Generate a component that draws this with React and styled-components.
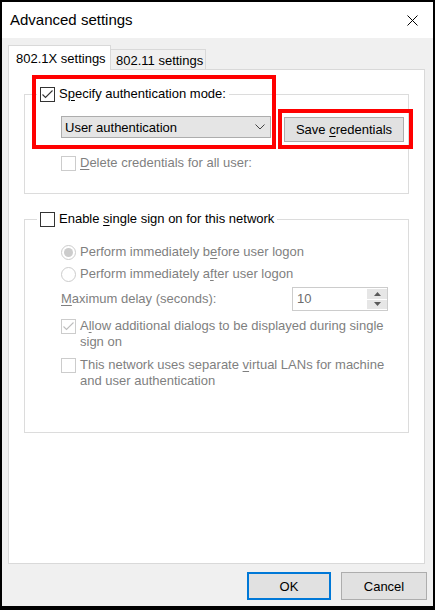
import React from 'react';
import styled, { createGlobalStyle } from 'styled-components';

const GlobalStyle = createGlobalStyle`
  html, body { margin: 0; padding: 0; background: #ffffff; }
  body { font-family: "Liberation Sans", Arial, sans-serif; }
`;

const FONT = `"Liberation Sans", Arial, sans-serif`;
const DIS = '#7f7f7f';

const Window = styled.div`
  width: 435px;
  height: 610px;
  box-sizing: border-box;
  border: 2px solid #000;
  border-bottom-width: 4px;
  background: #f0f0f0;
  display: flex;
  flex-direction: column;
  font-family: ${FONT};
  font-size: 13px;
  color: #000;
  overflow: hidden;
`;

const TitleBar = styled.div`
  height: 36px;
  flex-shrink: 0;
  box-sizing: border-box;
  background: #ffffff;
  display: flex;
  align-items: center;
  justify-content: space-between;
  padding: 0 15px 2px 8px;
`;

const Title = styled.span`
  font-size: 15px;
  color: #000;
`;

const CloseSvg = styled.svg`
  display: block;
  margin-top: 2px;
`;

const Body = styled.div`
  flex: 1;
  min-height: 0;
  display: flex;
  flex-direction: column;
  padding: 7px 8px 0 6px;
`;

const TabStrip = styled.div`
  display: flex;
  align-items: flex-end;
  height: 24px;
  flex-shrink: 0;
  position: relative;
  z-index: 1;
`;

const Tab = styled.div`
  box-sizing: border-box;
  display: flex;
  align-items: center;
  padding-top: 1px;
  font-size: 13px;
  white-space: nowrap;
  width: ${p => (p.$active ? 103 : 95)}px;
  height: ${p => (p.$active ? 25 : 20)}px;
  margin-bottom: ${p => (p.$active ? -1 : 0)}px;
  padding-left: ${p => (p.$active ? 7 : 5)}px;
  background: ${p => (p.$active ? '#ffffff' : '#f0f0f0')};
  border: 1px solid #d9d9d9;
  border-bottom: none;
  border-left: ${p => (p.$active ? '1px solid #d9d9d9' : 'none')};
`;

const Panel = styled.div`
  flex: 1;
  min-height: 0;
  position: relative;
  background: #ffffff;
  border: 1px solid #d9d9d9;
  padding: 16px 15px 0 15px;
  display: flex;
  flex-direction: column;
`;

const GroupBox = styled.fieldset`
  margin: ${p => p.$mt || 0}px 0 0 0;
  min-width: 0;
  border: 1px solid #dcdcdc;
  padding: 0 4px ${p => p.$pb}px 12px;
`;

const Legend = styled.legend`
  padding: 0 3px;
  height: 16px;
  line-height: 16px;
`;

const Content = styled.div`
  margin-left: 24px;
  padding-top: ${p => p.$pt}px;
  display: flex;
  flex-direction: column;
`;

const OptionRow = styled.label`
  display: flex;
  align-items: ${p => (p.$multi ? 'flex-start' : 'center')};
  gap: 4px;
  line-height: 16px;
  margin-top: ${p => p.$mt || 0}px;
  color: ${p => (p.$disabled ? DIS : '#000')};
`;

const OptionText = styled.span`
  flex: 1;
  min-width: 0;
`;

const Box = styled.span`
  box-sizing: border-box;
  width: 15px;
  height: 15px;
  flex-shrink: 0;
  margin-top: ${p => (p.$multi ? 0.5 : 0)}px;
  border: 1px solid ${p => (p.$disabled ? '#cccccc' : '#333333')};
  background: #ffffff;
  display: inline-flex;
  align-items: center;
  justify-content: center;
`;

const RadioCircle = styled.span`
  box-sizing: border-box;
  width: 15px;
  height: 15px;
  flex-shrink: 0;
  border-radius: 50%;
  border: 1px solid #cccccc;
  background: #ffffff;
  display: inline-flex;
  align-items: center;
  justify-content: center;
`;

const RadioDot = styled.span`
  width: 9px;
  height: 9px;
  border-radius: 50%;
  background: #cccccc;
`;

const Mn = styled.span`
  text-decoration: underline;
  text-underline-offset: 2px;
`;

const ComboRow = styled.div`
  display: flex;
  align-items: flex-start;
  gap: 13px;
`;

const Combo = styled.div`
  box-sizing: border-box;
  width: 210px;
  height: 22px;
  border: 1px solid #adadad;
  background: #e5e5e5;
  display: flex;
  align-items: center;
  justify-content: space-between;
  padding: 0 5px 0 3px;
`;

const Button = styled.button`
  box-sizing: border-box;
  width: ${p => p.$w}px;
  height: ${p => p.$h}px;
  margin-top: ${p => p.$mt || 0}px;
  padding: 0;
  font-family: ${FONT};
  font-size: 13px;
  color: #000;
  background: #e1e1e1;
  border: ${p => (p.$default ? '2px solid #0078d7' : '1px solid #adadad')};
  border-radius: 0;
`;

const DelayRow = styled.div`
  display: grid;
  grid-template-columns: 231px 96px;
  align-items: center;
  margin-top: ${p => p.$mt || 0}px;
  color: ${DIS};
  line-height: 16px;
`;

const SpinBox = styled.div`
  box-sizing: border-box;
  width: 96px;
  height: 24px;
  border: 1px solid #cccccc;
  background: #ffffff;
  display: flex;
`;

const SpinValue = styled.span`
  flex: 1;
  padding-left: 4px;
  line-height: 22px;
  color: #6d6d6d;
`;

const SpinButtons = styled.div`
  width: 20px;
  padding: 1px 0;
  display: flex;
  flex-direction: column;
  gap: 1px;
`;

const SpinButton = styled.div`
  flex: 1;
  background: #e6e6e6;
  display: flex;
  align-items: center;
  justify-content: center;
`;

const Footer = styled.div`
  flex-shrink: 0;
  display: flex;
  justify-content: flex-end;
  gap: 10px;
  padding: 8px 6px 6px 6px;
`;

const Highlight = styled.div`
  position: absolute;
  box-sizing: border-box;
  border: 4px solid #ff0000;
  pointer-events: none;
  left: ${p => p.$x}px;
  top: ${p => p.$y}px;
  width: ${p => p.$w}px;
  height: ${p => p.$h}px;
`;

const CheckMark = ({ color }) => (
  <svg width="13" height="13" viewBox="0 0 13 13">
    <polyline points="1.5,6.5 4.5,9.5 11.5,2.5" fill="none" stroke={color} strokeWidth="1.1" />
  </svg>
);

const Checkbox = ({ checked, disabled, multi }) => (
  <Box $disabled={disabled} $multi={multi}>
    {checked && <CheckMark color={disabled ? '#bdbdbd' : '#333333'} />}
  </Box>
);

const Radio = ({ checked }) => (
  <RadioCircle>{checked && <RadioDot />}</RadioCircle>
);

const Chevron = () => (
  <svg width="10" height="6" viewBox="0 0 10 6">
    <polyline points="0.5,0.5 5,5 9.5,0.5" fill="none" stroke="#444" strokeWidth="1" />
  </svg>
);

const Arrow = ({ up }) => (
  <svg width="7" height="4" viewBox="0 0 7 4">
    <polygon points={up ? '0,4 3.5,0 7,4' : '0,0 3.5,4 7,0'} fill="#5a5a5a" />
  </svg>
);

export default function App() {
  return (
    <>
      <GlobalStyle />
      <Window>
        <TitleBar>
          <Title>Advanced settings</Title>
          <CloseSvg width="11" height="11" viewBox="0 0 11 11">
            <line x1="0.5" y1="0.5" x2="10.5" y2="10.5" stroke="#000" strokeWidth="1" />
            <line x1="10.5" y1="0.5" x2="0.5" y2="10.5" stroke="#000" strokeWidth="1" />
          </CloseSvg>
        </TitleBar>
        <Body>
          <TabStrip>
            <Tab $active>802.1X settings</Tab>
            <Tab>802.11 settings</Tab>
          </TabStrip>
          <Panel>
            <GroupBox $pb={22}>
              <Legend>
                <OptionRow>
                  <Checkbox checked />
                  <OptionText>S<Mn>p</Mn>ecify authentication mode:</OptionText>
                </OptionRow>
              </Legend>
              <Content $pt={14}>
                <ComboRow>
                  <Combo>
                    <span>User authentication</span>
                    <Chevron />
                  </Combo>
                  <Button $w={120} $h={25} $mt={1}>Save <Mn>c</Mn>redentials</Button>
                </ComboRow>
                <OptionRow $disabled $mt={13}>
                  <Checkbox disabled />
                  <OptionText><Mn>D</Mn>elete credentials for all user:</OptionText>
                </OptionRow>
              </Content>
            </GroupBox>

            <GroupBox $mt={17} $pb={43}>
              <Legend>
                <OptionRow>
                  <Checkbox />
                  <OptionText>Enable <Mn>s</Mn>ingle sign on for this network</OptionText>
                </OptionRow>
              </Legend>
              <Content $pt={17}>
                <OptionRow $disabled>
                  <Radio checked />
                  <OptionText>Perform immediately b<Mn>e</Mn>fore user logon</OptionText>
                </OptionRow>
                <OptionRow $disabled $mt={6}>
                  <Radio />
                  <OptionText>Perform immediately a<Mn>f</Mn>ter user logon</OptionText>
                </OptionRow>
                <DelayRow $mt={5}>
                  <span><Mn>M</Mn>aximum delay (seconds):</span>
                  <SpinBox>
                    <SpinValue>10</SpinValue>
                    <SpinButtons>
                      <SpinButton><Arrow up /></SpinButton>
                      <SpinButton><Arrow /></SpinButton>
                    </SpinButtons>
                  </SpinBox>
                </DelayRow>
                <OptionRow $disabled $multi $mt={7}>
                  <Checkbox checked disabled multi />
                  <OptionText>A<Mn>l</Mn>low additional dialogs to be displayed during single sign on</OptionText>
                </OptionRow>
                <OptionRow $disabled $multi $mt={7}>
                  <Checkbox disabled multi />
                  <OptionText>This network uses separate <Mn>v</Mn>irtual LANs for machine and user authentication</OptionText>
                </OptionRow>
              </Content>
            </GroupBox>

            <Highlight $x={23} $y={5} $w={244} $h={74} />
            <Highlight $x={269} $y={39} $w={135} $h={40} />
          </Panel>
        </Body>
        <Footer>
          <Button $w={84} $h={28} $default>OK</Button>
          <Button $w={86} $h={28}>Cancel</Button>
        </Footer>
      </Window>
    </>
  );
}
